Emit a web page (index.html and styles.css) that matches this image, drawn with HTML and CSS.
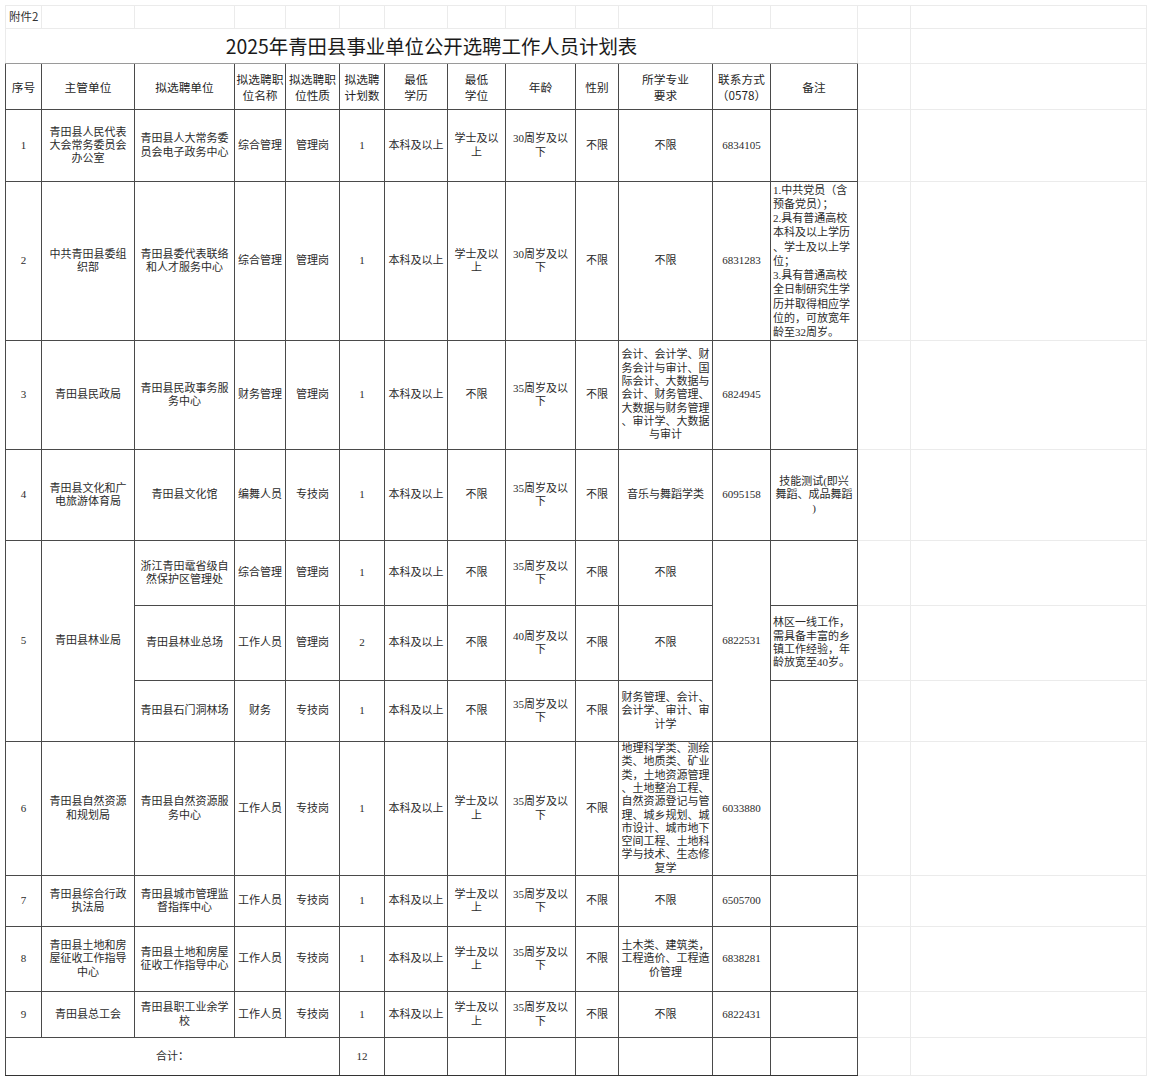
FILE: index.html
```html
<!DOCTYPE html>
<html lang="zh-CN">
<head>
<meta charset="utf-8">
<title>2025年青田县事业单位公开选聘工作人员计划表</title>
<link rel="stylesheet" href="styles.css">
</head>
<body>
<div class="page">
<table class="sheet">
<colgroup>
<col class="w36"><col class="w93"><col class="w100"><col class="w51"><col class="w54"><col class="w45"><col class="w63"><col class="w58"><col class="w70"><col class="w43"><col class="w94"><col class="w58"><col class="w87"><col class="w53"><col class="w236">
</colgroup>
<tbody>
<tr class="h0">
<td class="g att">附件2</td><td class="g"></td><td class="g"></td><td class="g"></td><td class="g"></td><td class="g"></td><td class="g"></td><td class="g"></td><td class="g"></td><td class="g"></td><td class="g"></td><td class="g"></td><td class="g"></td><td class="g"></td><td class="g"></td>
</tr>
<tr class="ht">
<td class="g title" colspan="13">2025年青田县事业单位公开选聘工作人员计划表</td><td class="g"></td><td class="g"></td>
</tr>
<tr class="hh">
<td class="hd">序号</td><td class="hd">主管单位</td><td class="hd">拟选聘单位</td><td class="hd">拟选聘职<br>位名称</td><td class="hd">拟选聘职<br>位性质</td><td class="hd">拟选聘<br>计划数</td><td class="hd">最低<br>学历</td><td class="hd">最低<br>学位</td><td class="hd">年龄</td><td class="hd">性别</td><td class="hd">所学专业<br>要求</td><td class="hd">联系方式<br>（0578）</td><td class="hd">备注</td><td class="g"></td><td class="g"></td>
</tr>
<tr class="h1">
<td>1</td><td>青田县人民代表<br>大会常务委员会<br>办公室</td><td>青田县人大常务委<br>员会电子政务中心</td><td>综合管理</td><td>管理岗</td><td>1</td><td>本科及以上</td><td>学士及以<br>上</td><td>30周岁及以<br>下</td><td>不限</td><td>不限</td><td>6834105</td><td></td><td class="g"></td><td class="g"></td>
</tr>
<tr class="h2">
<td>2</td><td>中共青田县委组<br>织部</td><td>青田县委代表联络<br>和人才服务中心</td><td>综合管理</td><td>管理岗</td><td>1</td><td>本科及以上</td><td>学士及以<br>上</td><td>30周岁及以<br>下</td><td>不限</td><td>不限</td><td>6831283</td><td class="l lh14">1.中共党员（含<br>预备党员）；<br>2.具有普通高校<br>本科及以上学历<br>、学士及以上学<br>位；<br>3.具有普通高校<br>全日制研究生学<br>历并取得相应学<br>位的，可放宽年<br>龄至32周岁。</td><td class="g"></td><td class="g"></td>
</tr>
<tr class="h3">
<td>3</td><td>青田县民政局</td><td>青田县民政事务服<br>务中心</td><td>财务管理</td><td>管理岗</td><td>1</td><td>本科及以上</td><td>不限</td><td>35周岁及以<br>下</td><td>不限</td><td>会计、会计学、财<br>务会计与审计、国<br>际会计、大数据与<br>会计、财务管理、<br>大数据与财务管理<br>、审计学、大数据<br>与审计</td><td>6824945</td><td></td><td class="g"></td><td class="g"></td>
</tr>
<tr class="h4">
<td>4</td><td>青田县文化和广<br>电旅游体育局</td><td>青田县文化馆</td><td>编舞人员</td><td>专技岗</td><td>1</td><td>本科及以上</td><td>不限</td><td>35周岁及以<br>下</td><td>不限</td><td>音乐与舞蹈学类</td><td>6095158</td><td>技能测试(即兴<br>舞蹈、成品舞蹈<br>)</td><td class="g"></td><td class="g"></td>
</tr>
<tr class="h5a">
<td rowspan="3">5</td><td rowspan="3">青田县林业局</td><td>浙江青田鼋省级自<br>然保护区管理处</td><td>综合管理</td><td>管理岗</td><td>1</td><td>本科及以上</td><td>不限</td><td>35周岁及以<br>下</td><td>不限</td><td>不限</td><td rowspan="3">6822531</td><td></td><td class="g"></td><td class="g"></td>
</tr>
<tr class="h5b">
<td>青田县林业总场</td><td>工作人员</td><td>管理岗</td><td>2</td><td>本科及以上</td><td>不限</td><td>40周岁及以<br>下</td><td>不限</td><td>不限</td><td class="l">林区一线工作，<br>需具备丰富的乡<br>镇工作经验，年<br>龄放宽至40岁。</td><td class="g"></td><td class="g"></td>
</tr>
<tr class="h5c">
<td>青田县石门洞林场</td><td>财务</td><td>专技岗</td><td>1</td><td>本科及以上</td><td>不限</td><td>35周岁及以<br>下</td><td>不限</td><td>财务管理、会计、<br>会计学、审计、审<br>计学</td><td></td><td class="g"></td><td class="g"></td>
</tr>
<tr class="h6">
<td>6</td><td>青田县自然资源<br>和规划局</td><td>青田县自然资源服<br>务中心</td><td>工作人员</td><td>专技岗</td><td>1</td><td>本科及以上</td><td>学士及以<br>上</td><td>35周岁及以<br>下</td><td>不限</td><td>地理科学类、测绘<br>类、地质类、矿业<br>类，土地资源管理<br>、土地整治工程、<br>自然资源登记与管<br>理、城乡规划、城<br>市设计、城市地下<br>空间工程、土地科<br>学与技术、生态修<br>复学</td><td>6033880</td><td></td><td class="g"></td><td class="g"></td>
</tr>
<tr class="h7">
<td>7</td><td>青田县综合行政<br>执法局</td><td>青田县城市管理监<br>督指挥中心</td><td>工作人员</td><td>专技岗</td><td>1</td><td>本科及以上</td><td>学士及以<br>上</td><td>35周岁及以<br>下</td><td>不限</td><td>不限</td><td>6505700</td><td></td><td class="g"></td><td class="g"></td>
</tr>
<tr class="h8">
<td>8</td><td>青田县土地和房<br>屋征收工作指导<br>中心</td><td>青田县土地和房屋<br>征收工作指导中心</td><td>工作人员</td><td>专技岗</td><td>1</td><td>本科及以上</td><td>学士及以<br>上</td><td>35周岁及以<br>下</td><td>不限</td><td>土木类、建筑类，<br>工程造价、工程造<br>价管理</td><td>6838281</td><td></td><td class="g"></td><td class="g"></td>
</tr>
<tr class="h9">
<td>9</td><td>青田县总工会</td><td>青田县职工业余学<br>校</td><td>工作人员</td><td>专技岗</td><td>1</td><td>本科及以上</td><td>学士及以<br>上</td><td>35周岁及以<br>下</td><td>不限</td><td>不限</td><td>6822431</td><td></td><td class="g"></td><td class="g"></td>
</tr>
<tr class="hs">
<td class="last" colspan="5">合计：</td><td class="last">12</td><td class="last"></td><td class="last"></td><td class="last"></td><td class="last"></td><td class="last"></td><td class="last"></td><td class="last"></td><td class="g"></td><td class="g"></td>
</tr>
</tbody>
</table>
</div>
</body>
</html>
```
FILE: styles.css
```css
html, body {
  margin: 0;
  padding: 0;
  background: #ffffff;
}
.page {
  padding: 5px 0 0 5px;
}
.sheet {
  border-collapse: collapse;
  table-layout: fixed;
  width: 1141px;
  font-family: "Liberation Serif", "Noto Sans CJK SC", serif;
  font-size: 11px;
  line-height: 13.3px;
  color: #2b2b2b;
}
.w36 { width: 36px; }
.w93 { width: 93px; }
.w100 { width: 100px; }
.w51 { width: 51px; }
.w54 { width: 54px; }
.w45 { width: 45px; }
.w63 { width: 63px; }
.w58 { width: 58px; }
.w70 { width: 70px; }
.w43 { width: 43px; }
.w94 { width: 94px; }
.w87 { width: 87px; }
.w53 { width: 53px; }
.w236 { width: 236px; }

.sheet td {
  border: 1px solid #4a4a4a;
  padding: 0 1px;
  text-align: center;
  vertical-align: middle;
  white-space: nowrap;
  overflow: hidden;
}
.sheet td.g {
  border: 1px solid #ebebeb;
}
.sheet td.att {
  text-align: left;
  padding-left: 3px;
  font-family: "Noto Sans CJK SC", sans-serif;
  font-size: 11.5px;
  color: #333;
}
.sheet td.title {
  font-family: "Noto Sans CJK SC", sans-serif;
  font-size: 19.4px;
  color: #1a1a1a;
  border-bottom-color: #9a9a9a;
}
.sheet td.hd {
  font-family: "Noto Sans CJK SC", sans-serif;
  font-size: 11.7px;
  line-height: 16px;
  color: #1f1f1f;
}
.sheet td.l {
  text-align: left;
  padding-left: 2px;
}
.sheet td.lh14 {
  line-height: 14.2px;
}
.sheet td.last {
  border-bottom: 1px solid #333;
}

.h0 { height: 23px; }
.ht { height: 35px; }
.hh { height: 46px; }
.h1 { height: 72px; }
.h2 { height: 159px; }
.h3 { height: 109px; }
.h4 { height: 91px; }
.h5a { height: 65px; }
.h5b { height: 75px; }
.h5c { height: 61px; }
.h6 { height: 134px; }
.h7 { height: 51px; }
.h8 { height: 65px; }
.h9 { height: 46px; }
.hs { height: 38px; }
```
